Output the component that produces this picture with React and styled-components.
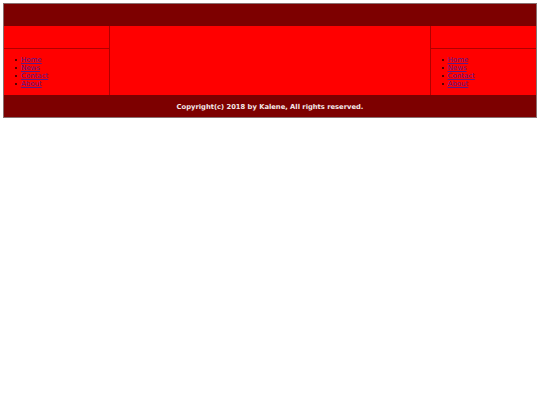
import React from "react";
import styled, { createGlobalStyle } from "styled-components";

const Global = createGlobalStyle`
  html, body { margin: 0; padding: 0; background: #fff; }
  body { padding: 3px; font-family: "DejaVu Sans", Verdana, sans-serif; font-size: 7px; }
`;

const Page = styled.div`
  border: 1px solid #8a7070;
  display: flex;
  flex-direction: column;
`;

const Header = styled.header`
  background: #7d0000;
  height: 22px;
`;

const Main = styled.div`
  display: grid;
  grid-template-columns: 20% 1fr 20%;
  background: #ff0000;
`;

const Side = styled.aside`
  display: flex;
  flex-direction: column;
  ${(p) => (p.$left ? "border-right: 1px solid #b00000;" : "border-left: 1px solid #b00000;")}
`;

const SideTop = styled.div`
  height: 22px;
  border-bottom: 1px solid #b00000;
`;

const NavList = styled.ul`
  margin: 7px 0;
  padding-left: 11px;
  list-style: none;
  line-height: 8px;
  font-size: 7px;
`;

const NavItem = styled.li`
  display: flex;
  align-items: center;
  &::before {
    content: "";
    width: 2px;
    height: 2px;
    margin-right: 4px;
    background: #5a0000;
    flex: none;
  }
`;

const NavLink = styled.a`
  color: #5a1a8b;
  text-decoration: underline;
`;

const Center = styled.section``;

const Footer = styled.footer`
  background: #7d0000;
  height: 22px;
  box-sizing: border-box;
  padding-top: 1px;
  display: flex;
  align-items: center;
  justify-content: center;
  color: #f4e8e8;
  font-weight: bold;
  font-size: 6.75px;
`;

const items = ["Home", "News", "Contact", "About"];

const Nav = () => (
  <NavList>
    {items.map((i) => (
      <NavItem key={i}>
        <NavLink href="#">{i}</NavLink>
      </NavItem>
    ))}
  </NavList>
);

export default function App() {
  return (
    <>
      <Global />
      <Page>
        <Header />
        <Main>
          <Side $left>
            <SideTop />
            <Nav />
          </Side>
          <Center />
          <Side>
            <SideTop />
            <Nav />
          </Side>
        </Main>
        <Footer>Copyright(c) 2018 by Kalene, All rights reserved.</Footer>
      </Page>
    </>
  );
}
